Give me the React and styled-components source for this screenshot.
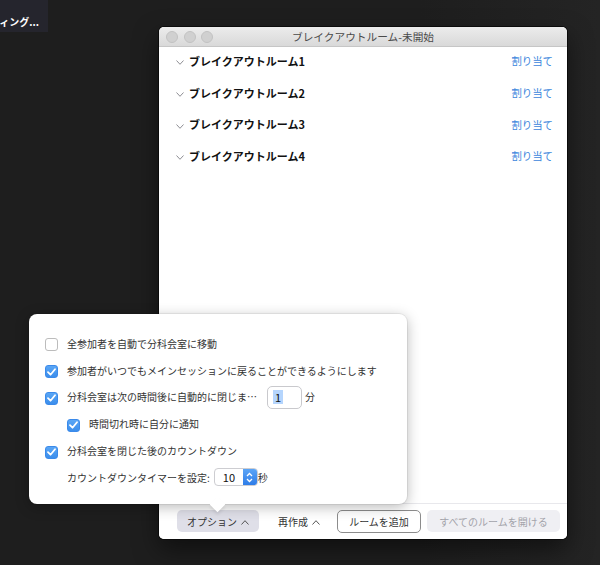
import React from "react";
import styled, { createGlobalStyle } from "styled-components";

const GlobalStyle = createGlobalStyle`
  html, body {
    margin: 0;
    padding: 0;
    background: #1f1f1f;
  }
  * {
    box-sizing: border-box;
  }
`;

const FONT = `"Noto Sans CJK JP", "Noto Sans", "Liberation Sans", sans-serif`;

const Desktop = styled.div`
  position: relative;
  width: 600px;
  height: 565px;
  padding: 27px 0 0 159px;
  background: linear-gradient(to right, #1e1e1e 70%, #242424);
  font-family: ${FONT};
  overflow: hidden;
`;

const MeetingTag = styled.div`
  position: absolute;
  left: 0;
  top: 0;
  width: 48px;
  height: 32px;
  padding: 0 9px 3px 0;
  display: flex;
  align-items: flex-end;
  justify-content: flex-end;
  white-space: nowrap;
  background: #25252d;
  color: #fff;
  font-size: 10px;
  font-weight: 700;
  line-height: 14px;
`;

const Window = styled.div`
  width: 408px;
  height: 512px;
  display: flex;
  flex-direction: column;
  background: #fff;
  border-radius: 5px;
  overflow: hidden;
  box-shadow: 0 0 0 1px #0b0b0b, 0 10px 24px rgba(0, 0, 0, 0.5);
`;

const TitleBar = styled.div`
  height: 20px;
  flex: none;
  display: grid;
  grid-template-columns: 1fr auto 1fr;
  align-items: center;
  background: linear-gradient(#ececec, #d9d9d9);
  border-bottom: 1px solid #c6c6c6;
`;

const Lights = styled.div`
  display: flex;
  gap: 5.5px;
  padding-left: 7px;
`;

const Light = styled.span`
  width: 12px;
  height: 12px;
  border-radius: 50%;
  background: #d0d0d0;
  border: 1px solid #c2c2c2;
`;

const Title = styled.div`
  font-size: 10.7px;
  color: #4a4a4a;
  white-space: nowrap;
`;

const RoomList = styled.div`
  flex: 1;
  margin-top: -2px;
`;

const RoomRow = styled.div`
  height: 31.7px;
  display: flex;
  align-items: center;
  padding: 0 14px 0 17px;
`;

const RoomChevron = styled.svg`
  width: 8px;
  height: 5px;
  margin: 4px 5px 0 0;
  flex: none;
`;

const RoomName = styled.div`
  flex: 1;
  font-size: 11px;
  font-weight: 700;
  color: #111;
`;

const AssignLink = styled.a`
  font-size: 10.4px;
  color: #3b86dc;
  text-decoration: none;
`;

const Footer = styled.div`
  height: 36px;
  flex: none;
  display: flex;
  align-items: center;
  padding: 0 0 1px 18px;
  border-top: 1px solid #e8e8ec;
  background: #fff;
`;

const FooterButton = styled.button`
  height: 22px;
  width: ${(p) => p.$width}px;
  margin-left: ${(p) => p.$gap || 0}px;
  padding: 0;
  display: flex;
  align-items: center;
  justify-content: center;
  gap: 4px;
  font-family: ${FONT};
  font-size: 10px;
  border-radius: 5px;
  cursor: default;
  color: ${(p) => (p.$disabled ? "#a3a3aa" : "#333")};
  background: ${(p) =>
    p.$variant === "active" ? "#dfdfe8" : p.$variant === "disabled" ? "#efeff3" : "transparent"};
  border: ${(p) => (p.$variant === "outline" ? "1px solid #8c8c8c" : "none")};
  ${(p) => p.$variant === "outline" && "height: 23px;"}
`;

const UpChevron = styled.svg`
  width: 8px;
  height: 5px;
  margin-top: 3px;
`;

const Popup = styled.div`
  position: absolute;
  left: 29px;
  top: 314px;
  width: 378px;
  height: 190px;
  padding: 16px 0 0 16px;
  background: #fff;
  border-radius: 8px;
  box-shadow: 0 0 0 1px rgba(0, 0, 0, 0.06), 0 3px 14px rgba(0, 0, 0, 0.28);

  &::after {
    content: "";
    position: absolute;
    left: 183px;
    bottom: -6px;
    width: 11px;
    height: 11px;
    background: #fff;
    transform: rotate(45deg);
    box-shadow: 2px 2px 3px rgba(0, 0, 0, 0.08);
  }
`;

const OptionRow = styled.div`
  height: 26.8px;
  display: flex;
  align-items: center;
  gap: 9px;
  padding-left: ${(p) => (p.$indent ? 22 : 0)}px;
  font-size: 10px;
  color: #333;
`;

const Box = styled.span`
  width: 13px;
  height: 13px;
  flex: none;
  margin-top: 3px;
  border-radius: 3px;
  display: flex;
  align-items: center;
  justify-content: center;
  background: ${(p) => (p.$checked ? "linear-gradient(#5aa6f5, #3b8eec)" : "#fff")};
  border: 1px solid ${(p) => (p.$checked ? "#3b8aea" : "#bcbcbc")};
`;

const OptionLabel = styled.span`
  white-space: nowrap;
  width: ${(p) => (p.$width ? `${p.$width}px` : "auto")};
`;

const NumberField = styled.div`
  width: 35px;
  height: 23px;
  margin-left: 1px;
  border: 1px solid #c9c9cd;
  border-radius: 5px;
  display: flex;
  align-items: center;
  padding-left: 5px;
  font-size: 11px;
  color: #111;
  margin-top: 1px;

  span {
    background: #b5d5fd;
    padding: 0 2px;
    line-height: 14px;
  }
`;

const Unit = styled.span`
  font-size: 10px;
  color: #333;
  margin-left: ${(p) => p.$pull || -6}px;
`;

const Stepper = styled.div`
  width: 44px;
  height: 18px;
  margin-left: -5px;
  display: flex;
  border: 1px solid #cdcdd1;
  border-radius: 4px;
  overflow: hidden;
  background: #fff;
`;

const StepperValue = styled.div`
  flex: 1;
  font-size: 11px;
  color: #111;
  padding-left: 8px;
  line-height: 16px;
`;

const StepperArrows = styled.div`
  width: 14px;
  display: flex;
  align-items: center;
  justify-content: center;
  background: linear-gradient(#5ba4f6, #2f7de8);
`;

const Check = () => (
  <svg width="9" height="8" viewBox="0 0 9 8">
    <polyline points="1,4.2 3.5,6.7 8,1.2" fill="none" stroke="#fff" strokeWidth="1.8" strokeLinecap="round" strokeLinejoin="round" />
  </svg>
);

const Checkbox = ({ checked }) => <Box $checked={checked}>{checked && <Check />}</Box>;

const Up = () => (
  <UpChevron viewBox="0 0 8 5">
    <polyline points="0.5,4.5 4,0.7 7.5,4.5" fill="none" stroke="#555" strokeWidth="1" />
  </UpChevron>
);

const rooms = ["ブレイクアウトルーム1", "ブレイクアウトルーム2", "ブレイクアウトルーム3", "ブレイクアウトルーム4"];

export default function App() {
  return (
    <>
      <GlobalStyle />
      <Desktop>
        <MeetingTag>ィング...</MeetingTag>

        <Window>
          <TitleBar>
            <Lights>
              <Light />
              <Light />
              <Light />
            </Lights>
            <Title>ブレイクアウトルーム-未開始</Title>
            <div />
          </TitleBar>

          <RoomList>
            {rooms.map((name) => (
              <RoomRow key={name}>
                <RoomChevron viewBox="0 0 8 5">
                  <polyline points="0.5,0.5 4,4.3 7.5,0.5" fill="none" stroke="#8e8e93" strokeWidth="1" />
                </RoomChevron>
                <RoomName>{name}</RoomName>
                <AssignLink>割り当て</AssignLink>
              </RoomRow>
            ))}
          </RoomList>

          <Footer>
            <FooterButton $width={82} $variant="active">
              オプション
              <Up />
            </FooterButton>
            <FooterButton $width={68} $gap={6}>
              再作成
              <Up />
            </FooterButton>
            <FooterButton $width={84} $gap={4} $variant="outline">
              ルームを追加
            </FooterButton>
            <FooterButton $width={133} $gap={6} $variant="disabled" $disabled>
              すべてのルームを開ける
            </FooterButton>
          </Footer>
        </Window>

        <Popup>
          <OptionRow>
            <Checkbox />
            <OptionLabel>全参加者を自動で分科会室に移動</OptionLabel>
          </OptionRow>
          <OptionRow>
            <Checkbox checked />
            <OptionLabel>参加者がいつでもメインセッションに戻ることができるようにします</OptionLabel>
          </OptionRow>
          <OptionRow>
            <Checkbox checked />
            <OptionLabel $width={190}>分科会室は次の時間後に自動的に閉じま…</OptionLabel>
            <NumberField>
              <span>1</span>
            </NumberField>
            <Unit>分</Unit>
          </OptionRow>
          <OptionRow $indent>
            <Checkbox checked />
            <OptionLabel>時間切れ時に自分に通知</OptionLabel>
          </OptionRow>
          <OptionRow>
            <Checkbox checked />
            <OptionLabel>分科会室を閉じた後のカウントダウン</OptionLabel>
          </OptionRow>
          <OptionRow $indent>
            <OptionLabel>カウントダウンタイマーを設定:</OptionLabel>
            <Stepper>
              <StepperValue>10</StepperValue>
              <StepperArrows>
                <svg width="7" height="11" viewBox="0 0 7 11">
                  <polyline points="1,4 3.5,1.5 6,4" fill="none" stroke="#fff" strokeWidth="1.3" />
                  <polyline points="1,7 3.5,9.5 6,7" fill="none" stroke="#fff" strokeWidth="1.3" />
                </svg>
              </StepperArrows>
            </Stepper>
            <Unit $pull={-9}>秒</Unit>
          </OptionRow>
        </Popup>
      </Desktop>
    </>
  );
}
